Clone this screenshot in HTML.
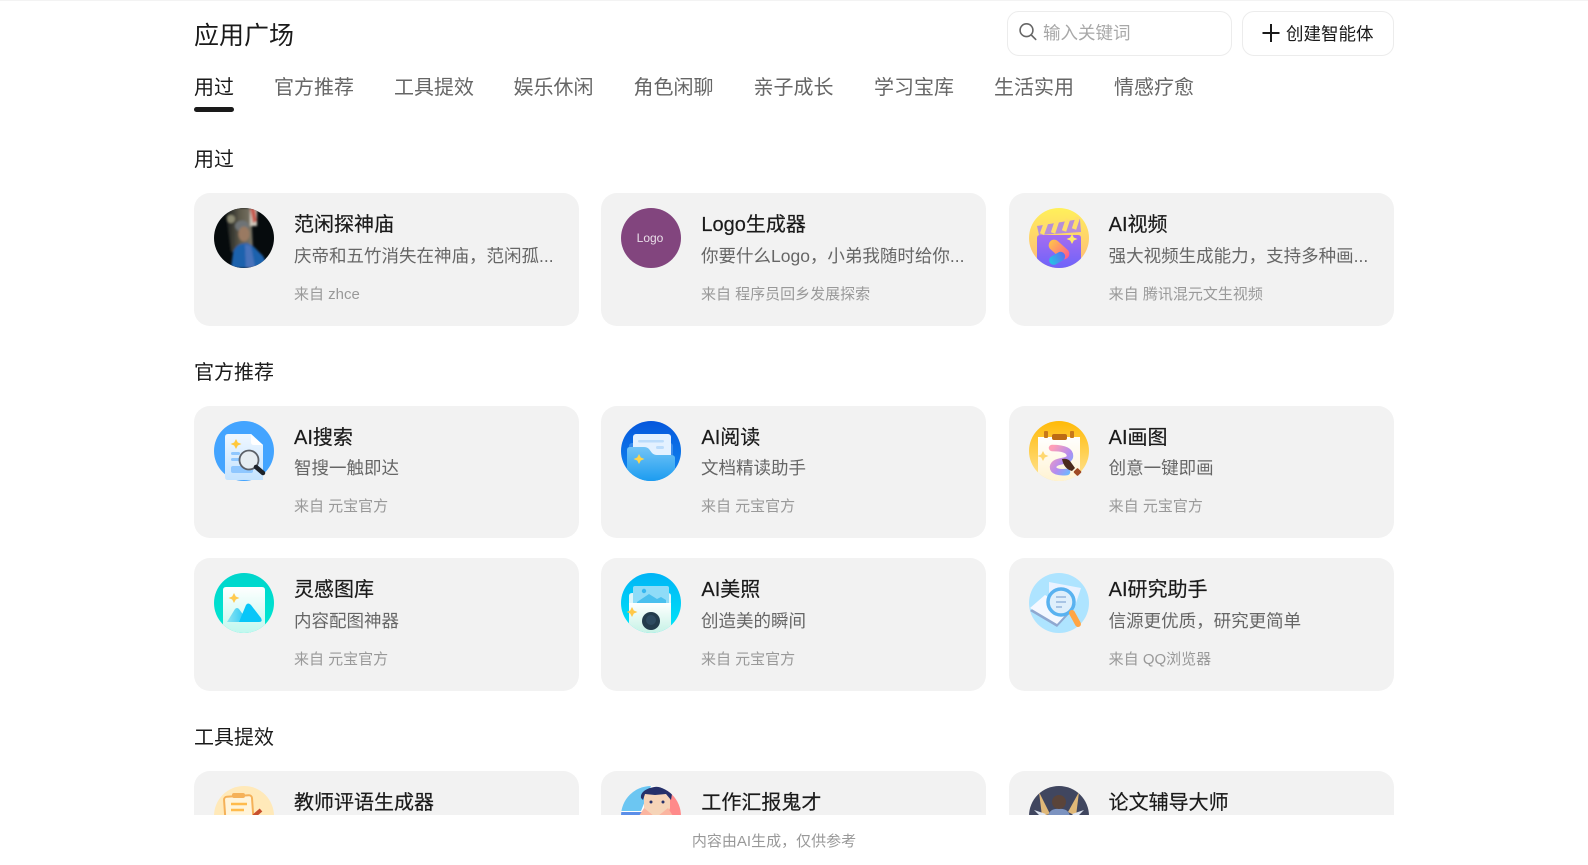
<!DOCTYPE html>
<html lang="zh-CN">
<head>
<meta charset="utf-8">
<title>应用广场</title>
<style>
*{box-sizing:border-box;margin:0;padding:0}
html,body{width:1588px;height:865px;overflow:hidden;background:#fff}
body{position:relative;font-family:"Liberation Sans","Noto Sans CJK SC",sans-serif;color:#1a1a1a}
.topline{position:absolute;left:0;top:0;width:1588px;height:1px;background:#f3f3f3}
.abs{position:absolute;white-space:nowrap}
.title{left:194px;top:18px;font-size:25px;line-height:36px}
.search{position:absolute;left:1007px;top:11px;width:225px;height:45px;border:1px solid #ececec;border-radius:12px;background:#fff}
.search svg{position:absolute;left:10px;top:10px}
.search span{position:absolute;left:35px;top:8px;font-size:17.5px;line-height:27px;color:#a8a8a8;white-space:nowrap}
.create{position:absolute;left:1242px;top:11px;width:152px;height:45px;border:1px solid #ececec;border-radius:12px;background:#fff}
.create svg{position:absolute;left:18px;top:11px}
.create span{position:absolute;left:43px;top:9px;font-size:17.5px;line-height:27px;white-space:nowrap}
.tab{position:absolute;top:73px;font-size:20px;line-height:30px;color:#666;white-space:nowrap}
.tab.on{color:#1a1a1a}
.bar{position:absolute;left:194px;top:107px;width:40px;height:5px;border-radius:3px;background:#1a1a1a}
.h{position:absolute;left:194px;font-size:20px;line-height:30px;white-space:nowrap}
.card{position:absolute;width:385px;height:132.5px;background:#f2f2f2;border-radius:16px;overflow:hidden}
.c1{left:194px}.c2{left:601px}.c3{left:1008.67px}
.card svg.i{position:absolute;left:20px;top:15px;width:60px;height:60px}
.card b{position:absolute;left:100px;top:17px;font-weight:400;font-size:20px;line-height:30px;color:#1a1a1a;white-space:nowrap;-webkit-text-stroke:.2px #1a1a1a}
.c2 b,.c2 p,.c2 i{left:100.400px}
.card p{position:absolute;left:100px;top:48px;font-size:17.5px;line-height:30px;color:#666;white-space:nowrap}
.card i{position:absolute;left:100px;top:91px;font-style:normal;font-size:15px;line-height:21px;color:#999;white-space:nowrap}
.card.r2{height:131.5px}
.card.r2 p{top:47px}
.card.r2 i{top:90px}
.foot{position:absolute;left:0;top:815px;width:1588px;height:50px;background:#fff}
.foot span{position:absolute;left:0;width:1548px;top:16px;text-align:center;font-size:15px;line-height:21px;color:#999}
</style>
</head>
<body>
<div class="topline"></div>
<div class="abs title">应用广场</div>
<div class="search">
<svg width="20" height="20" viewBox="0 0 20 20" fill="none" stroke="#666" stroke-width="1.6" stroke-linecap="round"><circle cx="8.500" cy="8.200" r="6.400"/><path d="M13.300 13l4.400 4.400"/></svg>
<span>输入关键词</span>
</div>
<div class="create">
<svg width="20" height="20" viewBox="0 0 20 20" fill="none" stroke="#1a1a1a" stroke-width="2"><path d="M10 1v18M1.500 10h17"/></svg>
<span>创建智能体</span>
</div>
<div class="tab on" style="left:194px">用过</div>
<div class="tab" style="left:274px">官方推荐</div>
<div class="tab" style="left:394px">工具提效</div>
<div class="tab" style="left:513.500px">娱乐休闲</div>
<div class="tab" style="left:633.500px">角色闲聊</div>
<div class="tab" style="left:753.500px">亲子成长</div>
<div class="tab" style="left:874px">学习宝库</div>
<div class="tab" style="left:994px">生活实用</div>
<div class="tab" style="left:1114px">情感疗愈</div>
<div class="bar"></div>

<div class="h" style="top:145px">用过</div>

<div class="card c1" style="top:193px">
<svg class="i" viewBox="0 0 60 60"><defs><clipPath id="a1"><circle cx="30" cy="30" r="30"/></clipPath><filter id="bl1" x="-20%" y="-20%" width="140%" height="140%"><feGaussianBlur stdDeviation="1"/></filter><linearGradient id="p1" x1="0" y1="0" x2="1" y2="0"><stop offset="0" stop-color="#14191a"/><stop offset=".55" stop-color="#5f5b4c"/><stop offset="1" stop-color="#7c7768"/></linearGradient></defs><g clip-path="url(#a1)"><rect width="60" height="60" fill="#060b0d"/><g filter="url(#bl1)"><path d="M11 0H37L39 44H17Z" fill="url(#p1)"/><circle cx="17" cy="11" r="4" fill="#8c8a72"/><rect x="36" y="0" width="7" height="18" fill="#cfc9bd"/><path d="M36 0h5l2 13-4 2z" fill="#c65a50"/><ellipse cx="28" cy="18" rx="7" ry="5.500" fill="#6e7376"/><ellipse cx="30" cy="26" rx="5.500" ry="7.500" fill="#9a7a62"/><path d="M17 60l2-15q2-7 8-9l6-1 6 3 10 10 6 12z" fill="#1f62ad"/><path d="M31 36l6 2 4 22h-9z" fill="#4a73bb"/></g></g></svg>
<b>范闲探神庙</b><p>庆帝和五竹消失在神庙，范闲孤...</p><i>来自 zhce</i></div>

<div class="card c2" style="top:193px">
<svg class="i" viewBox="0 0 60 60"><circle cx="30" cy="30" r="30" fill="#82457e"/><text x="29" y="34" text-anchor="middle" font-family="Liberation Sans,sans-serif" font-size="12" fill="#eadfe9">Logo</text></svg>
<b>Logo生成器</b><p>你要什么Logo，小弟我随时给你...</p><i>来自 程序员回乡发展探索</i></div>

<div class="card c3" style="top:193px">
<svg class="i" viewBox="0 0 60 60"><defs><linearGradient id="v1" x1="0" y1="0" x2="0" y2="1"><stop offset="0" stop-color="#fff05a"/><stop offset="1" stop-color="#ffb87a"/></linearGradient><linearGradient id="v2" x1="0" y1="0" x2="0" y2="1"><stop offset="0" stop-color="#a56df0"/><stop offset="1" stop-color="#6e63fa"/></linearGradient><linearGradient id="v3" x1="0" y1="0" x2="1" y2="0"><stop offset="0" stop-color="#ffc24a"/><stop offset="1" stop-color="#ff5d8a"/></linearGradient><linearGradient id="v4" x1="0" y1="0" x2="1" y2="0"><stop offset="0" stop-color="#24c4e4"/><stop offset="1" stop-color="#5a70f4"/></linearGradient><clipPath id="a2"><circle cx="30" cy="30" r="30"/></clipPath></defs><circle cx="30" cy="30" r="30" fill="url(#v1)"/><g clip-path="url(#a2)"><path d="M8 18l43-7 1 13-42 3z" fill="#b78fd8"/><path d="M17 15l-4 11M28 13l-4 12M39 11l-4 12M49 9l-4 12" stroke="#ffdf6a" stroke-width="4.500"/><path d="M11 27H49q3 0 3 3V60H8V30q0-3 3-3z" fill="url(#v2)"/></g><path d="M43 26l1.800 3.500 3.700 1.500-3.700 1.500L43 36l-1.800-3.500-3.700-1.500 3.700-1.500z" fill="#ffe96a"/><rect x="18" y="36" width="24" height="11" rx="5.500" fill="url(#v3)" transform="rotate(42 30 41.500)"/><rect x="20" y="46" width="17" height="9" rx="4.500" fill="url(#v4)" transform="rotate(-30 28 51)"/></svg>
<b>AI视频</b><p>强大视频生成能力，支持多种画...</p><i>来自 腾讯混元文生视频</i></div>

<div class="h" style="top:358px">官方推荐</div>

<div class="card c1 r2" style="top:406px">
<svg class="i" viewBox="0 0 60 60"><defs><linearGradient id="s1" x1="0" y1="0" x2="0" y2="1"><stop offset="0" stop-color="#eff7ff"/><stop offset="1" stop-color="#c4e3ff"/></linearGradient></defs><circle cx="30" cy="30" r="30" fill="#43a4ff"/><path d="M11 16q0-3 3-3H37L49 24V59H14q-3 0-3-3z" fill="url(#s1)"/><path d="M37 13l12 11H40q-3 0-3-3z" fill="#fff"/><path d="M22 18l1.800 3.500 3.700 1.500-3.700 1.500L22 28l-1.800-3.500-3.700-1.500 3.700-1.500z" fill="#ffc83c"/><rect x="17" y="31" width="9" height="3" rx="1.500" fill="#8fc7ff"/><rect x="17" y="37" width="9" height="3" rx="1.500" fill="#8fc7ff"/><rect x="17" y="45" width="22" height="7" rx="2" fill="#8fc7ff"/><circle cx="35" cy="39" r="9.500" fill="#e6edf2" stroke="#5b6068" stroke-width="1.800"/><path d="M42 46l7 6" stroke="#1d2229" stroke-width="4.500" stroke-linecap="round"/></svg>
<b>AI搜索</b><p>智搜一触即达</p><i>来自 元宝官方</i></div>

<div class="card c2 r2" style="top:406px">
<svg class="i" viewBox="0 0 60 60"><defs><linearGradient id="r1" x1="0" y1="0" x2="0" y2="1"><stop offset="0" stop-color="#0657dc"/><stop offset="1" stop-color="#0f8bf2"/></linearGradient><linearGradient id="r2" x1="0" y1="0" x2="0" y2="1"><stop offset="0" stop-color="#72c4f6"/><stop offset="1" stop-color="#1c9cf0"/></linearGradient><clipPath id="a3"><circle cx="30" cy="30" r="30"/></clipPath></defs><circle cx="30" cy="30" r="30" fill="url(#r1)"/><rect x="8" y="22" width="44" height="14" rx="3" fill="#3a8cec"/><rect x="12" y="13" width="38" height="26" rx="3" fill="#e4f1ff"/><rect x="17" y="19" width="26" height="2.500" rx="1.200" fill="#bcdcfb"/><rect x="35" y="25" width="8" height="3" rx="1.500" fill="#bcdcfb"/><path clip-path="url(#a3)" d="M6 29q0-3 3-3H23q3 0 5 2l3 4q2 2 5 2H50q4 0 4 3V60H6z" fill="url(#r2)"/><path d="M18 33l1.800 3.500 3.700 1.500-3.700 1.500L18 43l-1.800-3.500-3.700-1.500 3.700-1.500z" fill="#ffd54a"/></svg>
<b>AI阅读</b><p>文档精读助手</p><i>来自 元宝官方</i></div>

<div class="card c3 r2" style="top:406px">
<svg class="i" viewBox="0 0 60 60"><defs><linearGradient id="d1" x1="0" y1="0" x2="0" y2="1"><stop offset="0" stop-color="#ffba08"/><stop offset="1" stop-color="#ffe496"/></linearGradient><linearGradient id="d2" x1="0" y1="0" x2="0" y2="1"><stop offset="0" stop-color="#fff"/><stop offset="1" stop-color="#fff3d2"/></linearGradient><linearGradient id="d3" x1="0" y1="0" x2="1" y2="1"><stop offset="0" stop-color="#ff9fb6"/><stop offset=".6" stop-color="#b38cf0"/><stop offset="1" stop-color="#6fb8ff"/></linearGradient><clipPath id="a4"><circle cx="30" cy="30" r="30"/></clipPath></defs><circle cx="30" cy="30" r="30" fill="url(#d1)"/><path clip-path="url(#a4)" d="M9 16H51V60H9z" fill="url(#d2)"/><rect x="15" y="10" width="4" height="7" rx="1" fill="#c8791c"/><rect x="41" y="10" width="4" height="7" rx="1" fill="#c8791c"/><rect x="23" y="13" width="15" height="6" rx="2" fill="#bd6b14"/><path d="M14 30l1.800 3.500 3.700 1.500-3.700 1.500L14 40l-1.800-3.500-3.700-1.500 3.700-1.500z" fill="#ffd870"/><path d="M23 27c8 0 18 1 18 8 0 7-16 3-17 11 0 4 5 6 14 5" fill="none" stroke="url(#d3)" stroke-width="6.500" stroke-linecap="round"/><path d="M33 38q5-1 8 2l5 7-3 3q-8-2-10-12z" fill="#4a2a1c"/><rect x="45.500" y="48" width="6" height="6" rx="1" fill="#a04a24" transform="rotate(45 48.500 51)"/></svg>
<b>AI画图</b><p>创意一键即画</p><i>来自 元宝官方</i></div>

<div class="card c1" style="top:558px">
<svg class="i" viewBox="0 0 60 60"><defs><linearGradient id="l1" x1="0" y1="0" x2="0" y2="1"><stop offset="0" stop-color="#00d5cc"/><stop offset="1" stop-color="#00e8d2"/></linearGradient><linearGradient id="l2" x1="0" y1="0" x2="0" y2="1"><stop offset="0" stop-color="#fff"/><stop offset="1" stop-color="#c0f8ee"/></linearGradient><linearGradient id="l3" x1="0" y1="0" x2="1" y2="0"><stop offset="0" stop-color="#8fe4f2"/><stop offset="1" stop-color="#22c8f6"/></linearGradient><clipPath id="a5"><circle cx="30" cy="30" r="30"/></clipPath></defs><circle cx="30" cy="30" r="30" fill="url(#l1)"/><path clip-path="url(#a5)" d="M9 17q0-3 3-3H48q3 0 3 3V60H9z" fill="url(#l2)"/><path d="M20 20l1.800 3.500 3.700 1.500-3.700 1.500L20 30l-1.800-3.500-3.700-1.500 3.700-1.500z" fill="#ffca50"/><path d="M13 49l8-13q2-2 4 0l8 11-2 2z" fill="url(#l3)"/><path d="M25 49l7-17q2-3 5 0l10 13q2 4-2 4z" fill="#08c6f8"/></svg>
<b>灵感图库</b><p>内容配图神器</p><i>来自 元宝官方</i></div>

<div class="card c2" style="top:558px">
<svg class="i" viewBox="0 0 60 60"><defs><linearGradient id="m1" x1="0" y1="0" x2="0" y2="1"><stop offset="0" stop-color="#00b4f6"/><stop offset="1" stop-color="#00e8f8"/></linearGradient><linearGradient id="m2" x1="0" y1="0" x2="0" y2="1"><stop offset="0" stop-color="#ffffff"/><stop offset="1" stop-color="#c6f2e6"/></linearGradient><clipPath id="a6"><circle cx="30" cy="30" r="30"/></clipPath></defs><circle cx="30" cy="30" r="30" fill="url(#m1)"/><path d="M8 23q0-3 3-3H47q3 0 3 3V32H8z" fill="#dff6fb"/><rect x="12" y="13" width="36" height="20" rx="2" fill="#8fdcf8"/><path d="M16 29l12-8 8 5 4-2 5 3v3H16z" fill="#4ac0ee"/><circle cx="23" cy="18" r="2.200" fill="#38b8f0"/><path clip-path="url(#a6)" d="M8 30H50V60H8z" fill="url(#m2)"/><path d="M11 34l1.800 3.500 3.700 1.500-3.700 1.500L11 44l-1.800-3.500-3.700-1.500 3.700-1.500z" fill="#ffc848"/><circle cx="30" cy="48" r="9" fill="#233c4c"/><circle cx="30" cy="47" r="5" fill="#2e4b60"/></svg>
<b>AI美照</b><p>创造美的瞬间</p><i>来自 元宝官方</i></div>

<div class="card c3" style="top:558px">
<svg class="i" viewBox="0 0 60 60"><circle cx="30" cy="30" r="30" fill="#aee4ff"/><path d="M1 38l14-12 26 14-13 14z" fill="#8fa8d0"/><path d="M1 35l15-13 26 14-14 15z" fill="#f4f8ff"/><path d="M20 9l32 6-8 24-24-8z" fill="#eaf2ff"/><circle cx="32" cy="29" r="13" fill="#dfeffb" stroke="#59b2f0" stroke-width="3.500"/><path d="M27 24h10M27 29h10M27 34h6" stroke="#a8c4e4" stroke-width="2"/><path d="M43 40l6 11" stroke="#ffa544" stroke-width="6" stroke-linecap="round"/></svg>
<b>AI研究助手</b><p>信源更优质，研究更简单</p><i>来自 QQ浏览器</i></div>

<div class="h" style="top:723px">工具提效</div>

<div class="card c1" style="top:771px">
<svg class="i" viewBox="0 0 60 60"><circle cx="30" cy="30" r="30" fill="#ffe9b9"/><rect x="11" y="10" width="28" height="34" rx="3" fill="#fff4da" stroke="#f5b158" stroke-width="2" transform="rotate(-4 25 27)"/><rect x="18" y="7" width="13" height="5" rx="2" fill="#f5b158"/><path d="M17 18h16M17 24h13" stroke="#ffbb4c" stroke-width="2.500"/><path d="M40 30l7-6" stroke="#c8502e" stroke-width="4"/></svg>
<b>教师评语生成器</b></div>

<div class="card c2" style="top:771px">
<svg class="i" viewBox="0 0 60 60"><defs><clipPath id="a7"><circle cx="30" cy="30" r="30"/></clipPath></defs><g clip-path="url(#a7)"><rect width="60" height="60" fill="#fff"/><path d="M0 0h30L20 25 0 25z" fill="#6cc6f2"/><rect x="0" y="26" width="22" height="3" fill="#5b8ee8"/><path d="M46 4l14 0v26H46z" fill="#ff8a8a"/><path d="M23 8h26v14q-2 8-13 8-11 0-13-8z" fill="#f6d4b8"/><path d="M20 12C18 0 48-4 51 8l-1 6-5-6-11 1-10-1-2 6z" fill="#26306a"/><circle cx="30" cy="16" r="1.500" fill="#26306a"/><circle cx="42" cy="16" r="1.500" fill="#26306a"/><path d="M18 30l5-8 10 8zM52 30l-5-8-10 8z" fill="#fbb5a0"/></g></svg>
<b>工作汇报鬼才</b></div>

<div class="card c3" style="top:771px">
<svg class="i" viewBox="0 0 60 60"><defs><clipPath id="a8"><circle cx="30" cy="30" r="30"/></clipPath></defs><g clip-path="url(#a8)"><rect width="60" height="60" fill="#40465f"/><path d="M10 6l11 22-8 2zM50 6L39 26l8 4z" fill="#e0b878"/><circle cx="30" cy="16" r="7" fill="#5a443a"/><path d="M19 30q2-8 11-7 9-1 11 7z" fill="#7c93c0"/><path d="M5 24l12 4-4 4zM55 24l-12 4 4 4z" fill="#dfe6f2"/></g></svg>
<b>论文辅导大师</b></div>

<div class="foot"><span>内容由AI生成，仅供参考</span></div>
</body>
</html>
